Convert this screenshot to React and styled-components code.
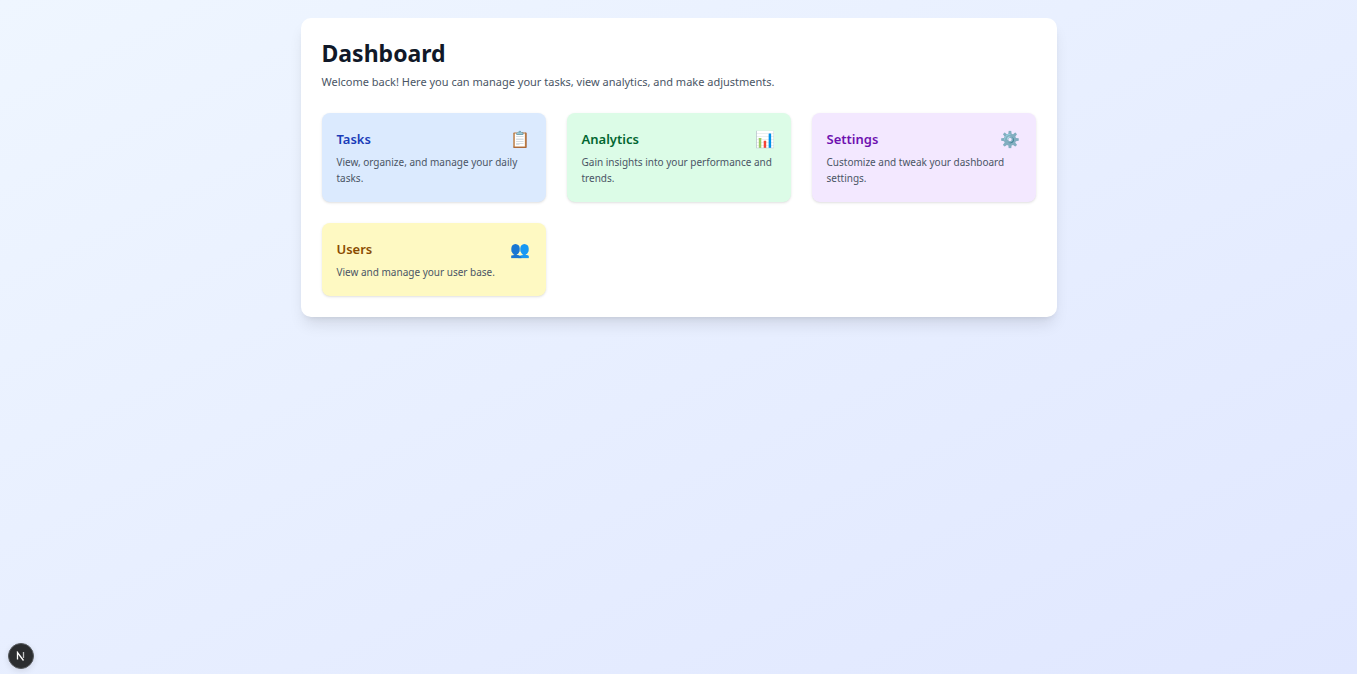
import React from "react";
import styled, { createGlobalStyle } from "styled-components";

const GlobalStyle = createGlobalStyle`
  *, *::before, *::after { box-sizing: border-box; }
  body {
    margin: 0;
    font-family: "Noto Sans", "Open Sans", sans-serif;
    color: #101828;
  }
  h1, h2, p { margin: 0; }
`;

const Page = styled.div`
  min-height: 100vh;
  padding: 18px;
  background: linear-gradient(to bottom right, #eff6ff, #e0e7ff);
`;

const Panel = styled.main`
  max-width: 756px;
  margin: 0 auto;
  padding: 21px;
  background: #fff;
  border-radius: 10px;
  box-shadow: 0 10px 15px -3px rgba(0, 0, 0, 0.1), 0 4px 6px -4px rgba(0, 0, 0, 0.1);
`;

const Title = styled.h1`
  font-size: 23px;
  line-height: 28px;
  font-weight: 700;
  margin-bottom: 5px;
`;

const Intro = styled.p`
  font-size: 11px;
  line-height: 20px;
  color: #4a5565;
  margin-bottom: 21px;
`;

const CardGrid = styled.div`
  display: grid;
  grid-template-columns: repeat(auto-fit, minmax(200px, 1fr));
  align-items: start;
  gap: 21px;
`;

const Card = styled.a`
  display: block;
  padding: 16px 15px;
  border-radius: 8px;
  background: ${(p) => p.$background};
  color: ${(p) => p.$color};
  text-decoration: none;
  box-shadow: 0 1px 3px rgba(0, 0, 0, 0.1), 0 1px 2px -1px rgba(0, 0, 0, 0.1);
`;

const CardHeader = styled.div`
  display: flex;
  align-items: center;
  justify-content: space-between;
  height: 21px;
  margin-bottom: 4px;
`;

const CardTitle = styled.h2`
  font-size: 13px;
  line-height: 21px;
  font-weight: 600;
`;

const CardIcon = styled.span`
  font-family: "Noto Color Emoji", "Noto Sans", sans-serif;
  font-size: 16px;
  line-height: 21px;
`;

const CardText = styled.p`
  font-size: 10px;
  line-height: 16px;
  color: #4a5565;
`;

const DevButton = styled.button`
  position: fixed;
  left: 8px;
  bottom: 5px;
  display: grid;
  place-items: center;
  width: 26px;
  height: 26px;
  padding: 0;
  border: 1px solid #55585c;
  border-radius: 50%;
  background: #2b2d2f;
  box-shadow: 0 2px 6px rgba(0, 0, 0, 0.1);
`;

const cards = [
  { title: "Tasks", icon: "📋", text: "View, organize, and manage your daily tasks.", background: "#dbeafe", color: "#193cb8" },
  { title: "Analytics", icon: "📊", text: "Gain insights into your performance and trends.", background: "#dcfce7", color: "#016630" },
  { title: "Settings", icon: "⚙️", text: "Customize and tweak your dashboard settings.", background: "#f3e8ff", color: "#6e11b0" },
  { title: "Users", icon: "👥", text: "View and manage your user base.", background: "#fef9c2", color: "#894b00" },
];

export default function App() {
  return (
    <Page>
      <GlobalStyle />
      <Panel>
        <Title>Dashboard</Title>
        <Intro>Welcome back! Here you can manage your tasks, view analytics, and make adjustments.</Intro>
        <CardGrid>
          {cards.map((card) => (
            <Card key={card.title} href="#" $background={card.background} $color={card.color}>
              <CardHeader>
                <CardTitle>{card.title}</CardTitle>
                <CardIcon aria-hidden="true">{card.icon}</CardIcon>
              </CardHeader>
              <CardText>{card.text}</CardText>
            </Card>
          ))}
        </CardGrid>
      </Panel>
      <DevButton aria-label="Open developer tools">
        <svg width="10" height="10" viewBox="0 0 10 10" fill="none" stroke="#fff" aria-hidden="true">
          <path d="M1.5 8.5V1.5L7.5 9.5" strokeWidth="1.3" />
          <path d="M7.5 1v6" strokeWidth="1.3" strokeOpacity="0.7" />
        </svg>
      </DevButton>
    </Page>
  );
}
